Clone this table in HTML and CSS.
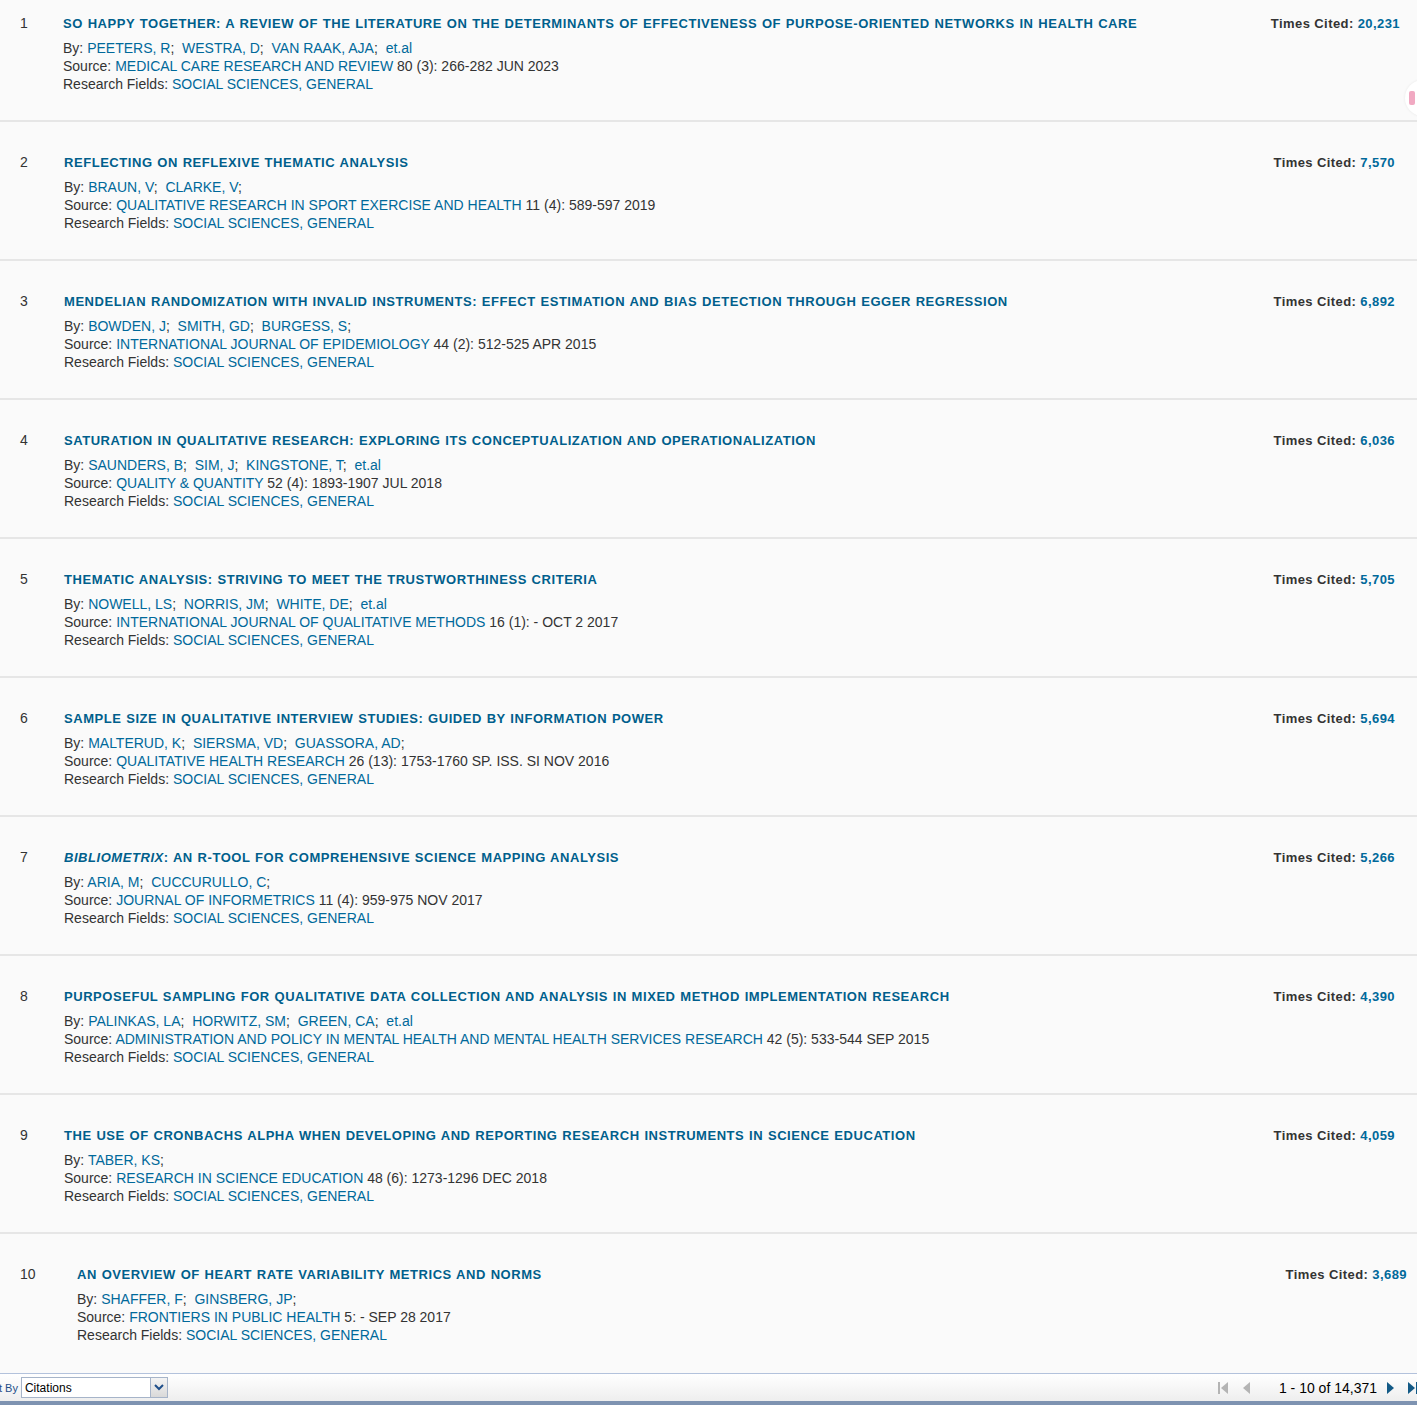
FILE: index.html
```html
<!DOCTYPE html>
<html lang="en">
<head>
  <meta charset="UTF-8" />
  <title>Highly Cited Papers</title>
  <link rel="stylesheet" href="styles.css">
</head>
<body>
  <div class="records">

    <div class="record first">
      <div class="num">1</div>
      <div class="info">
        <div class="title">SO HAPPY TOGETHER: A REVIEW OF THE LITERATURE ON THE DETERMINANTS OF EFFECTIVENESS OF PURPOSE-ORIENTED NETWORKS IN HEALTH CARE</div>
        <div class="line">By: <a>PEETERS, R</a>;&nbsp; <a>WESTRA, D</a>;&nbsp; <a>VAN RAAK, AJA</a>;&nbsp; <a>et.al</a></div>
        <div class="line">Source: <a>MEDICAL CARE RESEARCH AND REVIEW</a> 80 (3): 266-282 JUN 2023</div>
        <div class="line">Research Fields: <a>SOCIAL SCIENCES, GENERAL</a></div>
      </div>
      <div class="cited">Times Cited: <span>20,231</span></div>
    </div>

    <div class="record">
      <div class="num">2</div>
      <div class="info">
        <div class="title">REFLECTING ON REFLEXIVE THEMATIC ANALYSIS</div>
        <div class="line">By: <a>BRAUN, V</a>;&nbsp; <a>CLARKE, V</a>;</div>
        <div class="line">Source: <a>QUALITATIVE RESEARCH IN SPORT EXERCISE AND HEALTH</a> 11 (4): 589-597 2019</div>
        <div class="line">Research Fields: <a>SOCIAL SCIENCES, GENERAL</a></div>
      </div>
      <div class="cited">Times Cited: <span>7,570</span></div>
    </div>

    <div class="record">
      <div class="num">3</div>
      <div class="info">
        <div class="title">MENDELIAN RANDOMIZATION WITH INVALID INSTRUMENTS: EFFECT ESTIMATION AND BIAS DETECTION THROUGH EGGER REGRESSION</div>
        <div class="line">By: <a>BOWDEN, J</a>;&nbsp; <a>SMITH, GD</a>;&nbsp; <a>BURGESS, S</a>;</div>
        <div class="line">Source: <a>INTERNATIONAL JOURNAL OF EPIDEMIOLOGY</a> 44 (2): 512-525 APR 2015</div>
        <div class="line">Research Fields: <a>SOCIAL SCIENCES, GENERAL</a></div>
      </div>
      <div class="cited">Times Cited: <span>6,892</span></div>
    </div>

    <div class="record">
      <div class="num">4</div>
      <div class="info">
        <div class="title">SATURATION IN QUALITATIVE RESEARCH: EXPLORING ITS CONCEPTUALIZATION AND OPERATIONALIZATION</div>
        <div class="line">By: <a>SAUNDERS, B</a>;&nbsp; <a>SIM, J</a>;&nbsp; <a>KINGSTONE, T</a>;&nbsp; <a>et.al</a></div>
        <div class="line">Source: <a>QUALITY &amp; QUANTITY</a> 52 (4): 1893-1907 JUL 2018</div>
        <div class="line">Research Fields: <a>SOCIAL SCIENCES, GENERAL</a></div>
      </div>
      <div class="cited">Times Cited: <span>6,036</span></div>
    </div>

    <div class="record">
      <div class="num">5</div>
      <div class="info">
        <div class="title">THEMATIC ANALYSIS: STRIVING TO MEET THE TRUSTWORTHINESS CRITERIA</div>
        <div class="line">By: <a>NOWELL, LS</a>;&nbsp; <a>NORRIS, JM</a>;&nbsp; <a>WHITE, DE</a>;&nbsp; <a>et.al</a></div>
        <div class="line">Source: <a>INTERNATIONAL JOURNAL OF QUALITATIVE METHODS</a> 16 (1): - OCT 2 2017</div>
        <div class="line">Research Fields: <a>SOCIAL SCIENCES, GENERAL</a></div>
      </div>
      <div class="cited">Times Cited: <span>5,705</span></div>
    </div>

    <div class="record">
      <div class="num">6</div>
      <div class="info">
        <div class="title">SAMPLE SIZE IN QUALITATIVE INTERVIEW STUDIES: GUIDED BY INFORMATION POWER</div>
        <div class="line">By: <a>MALTERUD, K</a>;&nbsp; <a>SIERSMA, VD</a>;&nbsp; <a>GUASSORA, AD</a>;</div>
        <div class="line">Source: <a>QUALITATIVE HEALTH RESEARCH</a> 26 (13): 1753-1760 SP. ISS. SI NOV 2016</div>
        <div class="line">Research Fields: <a>SOCIAL SCIENCES, GENERAL</a></div>
      </div>
      <div class="cited">Times Cited: <span>5,694</span></div>
    </div>

    <div class="record">
      <div class="num">7</div>
      <div class="info">
        <div class="title"><i>BIBLIOMETRIX</i>: AN R-TOOL FOR COMPREHENSIVE SCIENCE MAPPING ANALYSIS</div>
        <div class="line">By: <a>ARIA, M</a>;&nbsp; <a>CUCCURULLO, C</a>;</div>
        <div class="line">Source: <a>JOURNAL OF INFORMETRICS</a> 11 (4): 959-975 NOV 2017</div>
        <div class="line">Research Fields: <a>SOCIAL SCIENCES, GENERAL</a></div>
      </div>
      <div class="cited">Times Cited: <span>5,266</span></div>
    </div>

    <div class="record">
      <div class="num">8</div>
      <div class="info">
        <div class="title">PURPOSEFUL SAMPLING FOR QUALITATIVE DATA COLLECTION AND ANALYSIS IN MIXED METHOD IMPLEMENTATION RESEARCH</div>
        <div class="line">By: <a>PALINKAS, LA</a>;&nbsp; <a>HORWITZ, SM</a>;&nbsp; <a>GREEN, CA</a>;&nbsp; <a>et.al</a></div>
        <div class="line">Source: <a>ADMINISTRATION AND POLICY IN MENTAL HEALTH AND MENTAL HEALTH SERVICES RESEARCH</a> 42 (5): 533-544 SEP 2015</div>
        <div class="line">Research Fields: <a>SOCIAL SCIENCES, GENERAL</a></div>
      </div>
      <div class="cited">Times Cited: <span>4,390</span></div>
    </div>

    <div class="record">
      <div class="num">9</div>
      <div class="info">
        <div class="title">THE USE OF CRONBACHS ALPHA WHEN DEVELOPING AND REPORTING RESEARCH INSTRUMENTS IN SCIENCE EDUCATION</div>
        <div class="line">By: <a>TABER, KS</a>;</div>
        <div class="line">Source: <a>RESEARCH IN SCIENCE EDUCATION</a> 48 (6): 1273-1296 DEC 2018</div>
        <div class="line">Research Fields: <a>SOCIAL SCIENCES, GENERAL</a></div>
      </div>
      <div class="cited">Times Cited: <span>4,059</span></div>
    </div>

    <div class="record wide">
      <div class="num">10</div>
      <div class="info">
        <div class="title">AN OVERVIEW OF HEART RATE VARIABILITY METRICS AND NORMS</div>
        <div class="line">By: <a>SHAFFER, F</a>;&nbsp; <a>GINSBERG, JP</a>;</div>
        <div class="line">Source: <a>FRONTIERS IN PUBLIC HEALTH</a> 5: - SEP 28 2017</div>
        <div class="line">Research Fields: <a>SOCIAL SCIENCES, GENERAL</a></div>
      </div>
      <div class="cited">Times Cited: <span>3,689</span></div>
    </div>

  </div>

  <div class="float-btn"><span></span></div>

  <div class="pager-bar">
    <div class="sort">
      <span class="sort-label">t By</span>
      <div class="select">
        <span>Citations</span>
        <div class="select-btn">
          <svg width="10" height="7" viewBox="0 0 10 7"><path d="M1 1 L5 5 L9 1" fill="none" stroke="#1f4f8a" stroke-width="2"/></svg>
        </div>
      </div>
    </div>
    <div class="pages">
      <svg class="pg-icon" width="11" height="14" viewBox="0 0 11 14"><rect x="0" y="1" width="2" height="12" fill="#b4b4b4"/><path d="M10 1 L3 7 L10 13 Z" fill="#b4b4b4"/></svg>
      <svg class="pg-icon prev" width="9" height="14" viewBox="0 0 9 14"><path d="M8 1 L1 7 L8 13 Z" fill="#b4b4b4"/></svg>
      <span class="pg-text">1 - 10 of 14,371</span>
      <svg class="pg-icon next" width="9" height="14" viewBox="0 0 9 14"><path d="M1 1 L8 7 L1 13 Z" fill="#135a86"/></svg>
      <svg class="pg-icon last" width="11" height="14" viewBox="0 0 11 14"><path d="M1 1 L8 7 L1 13 Z" fill="#135a86"/><rect x="9" y="1" width="2" height="12" fill="#135a86"/></svg>
    </div>
  </div>
</body>
</html>
```

FILE: styles.css
```css
body {
  margin: 0;
  background: #fafafa;
  font-family: "Liberation Sans", Arial, sans-serif;
  color: #333;
  height: 1405px;
  overflow: hidden;
  position: relative;
}

.records {
  height: 1373px;
  overflow: hidden;
}

.record {
  display: flex;
  height: 139px;
  box-sizing: border-box;
  padding: 32px 22px 0 20px;
  border-bottom: 2px solid #e6e6e6;
}

.record.first {
  height: 122px;
  padding-top: 15px;
  padding-right: 17px;
}

.record.wide {
  padding-right: 10px;
  border-bottom: none;
}

.num {
  width: 44px;
  flex: none;
  font-size: 14px;
  line-height: 18px;
  margin-top: -1px;
}

.record.first .num { width: 43px; }
.record.wide .num { width: 57px; }

.info {
  flex: 1;
}

.title {
  font-size: 13px;
  font-weight: bold;
  line-height: 18px;
  color: #005f8c;
  letter-spacing: 0.55px;
  word-spacing: 0.6px;
  margin-bottom: 6px;
}

.line {
  font-size: 14px;
  line-height: 18px;
  color: #333;
}

.line a {
  color: #00699a;
}

.cited {
  font-size: 13px;
  font-weight: bold;
  line-height: 18px;
  color: #333;
  letter-spacing: 0.42px;
  white-space: nowrap;
}

.cited span {
  color: #00699a;
}

.float-btn {
  position: absolute;
  right: -24px;
  top: 80px;
  width: 36px;
  height: 36px;
  border-radius: 50%;
  background: #fff;
  box-shadow: 0 0 3px rgba(0, 0, 0, 0.08);
}

.float-btn span {
  position: absolute;
  left: 4px;
  top: 11px;
  width: 6px;
  height: 14px;
  background: #f1a9c2;
  border-radius: 2px;
}

.pager-bar {
  height: 32px;
  box-sizing: border-box;
  border-top: 1px solid #b3c2dc;
  border-bottom: 4px solid #7e93b1;
  background: linear-gradient(#ffffff, #eeeeee);
  display: flex;
  align-items: center;
  justify-content: space-between;
}

.sort {
  display: flex;
  align-items: center;
  font-size: 11px;
  margin-left: -1px;
}

.sort-label {
  color: #1f4f8a;
  margin-right: 3px;
}

.select {
  width: 147px;
  height: 21px;
  box-sizing: border-box;
  border: 1px solid #a6b4c9;
  background: #fff;
  display: flex;
  align-items: center;
  justify-content: space-between;
  font-size: 12px;
  color: #000;
  padding-left: 3px;
}

.select-btn {
  width: 16px;
  height: 19px;
  border-left: 1px solid #a6b4c9;
  background: linear-gradient(#f4f4f4, #d9d9d9);
  display: flex;
  align-items: center;
  justify-content: center;
}

.pages {
  display: flex;
  align-items: center;
  margin-right: -1px;
}

.pg-icon { display: block; }
.prev { margin-left: 13px; }
.next { margin-left: 9px; }
.last { margin-left: 12px; }

.pg-text {
  font-size: 14px;
  color: #000;
  margin-left: 28px;
}
```
